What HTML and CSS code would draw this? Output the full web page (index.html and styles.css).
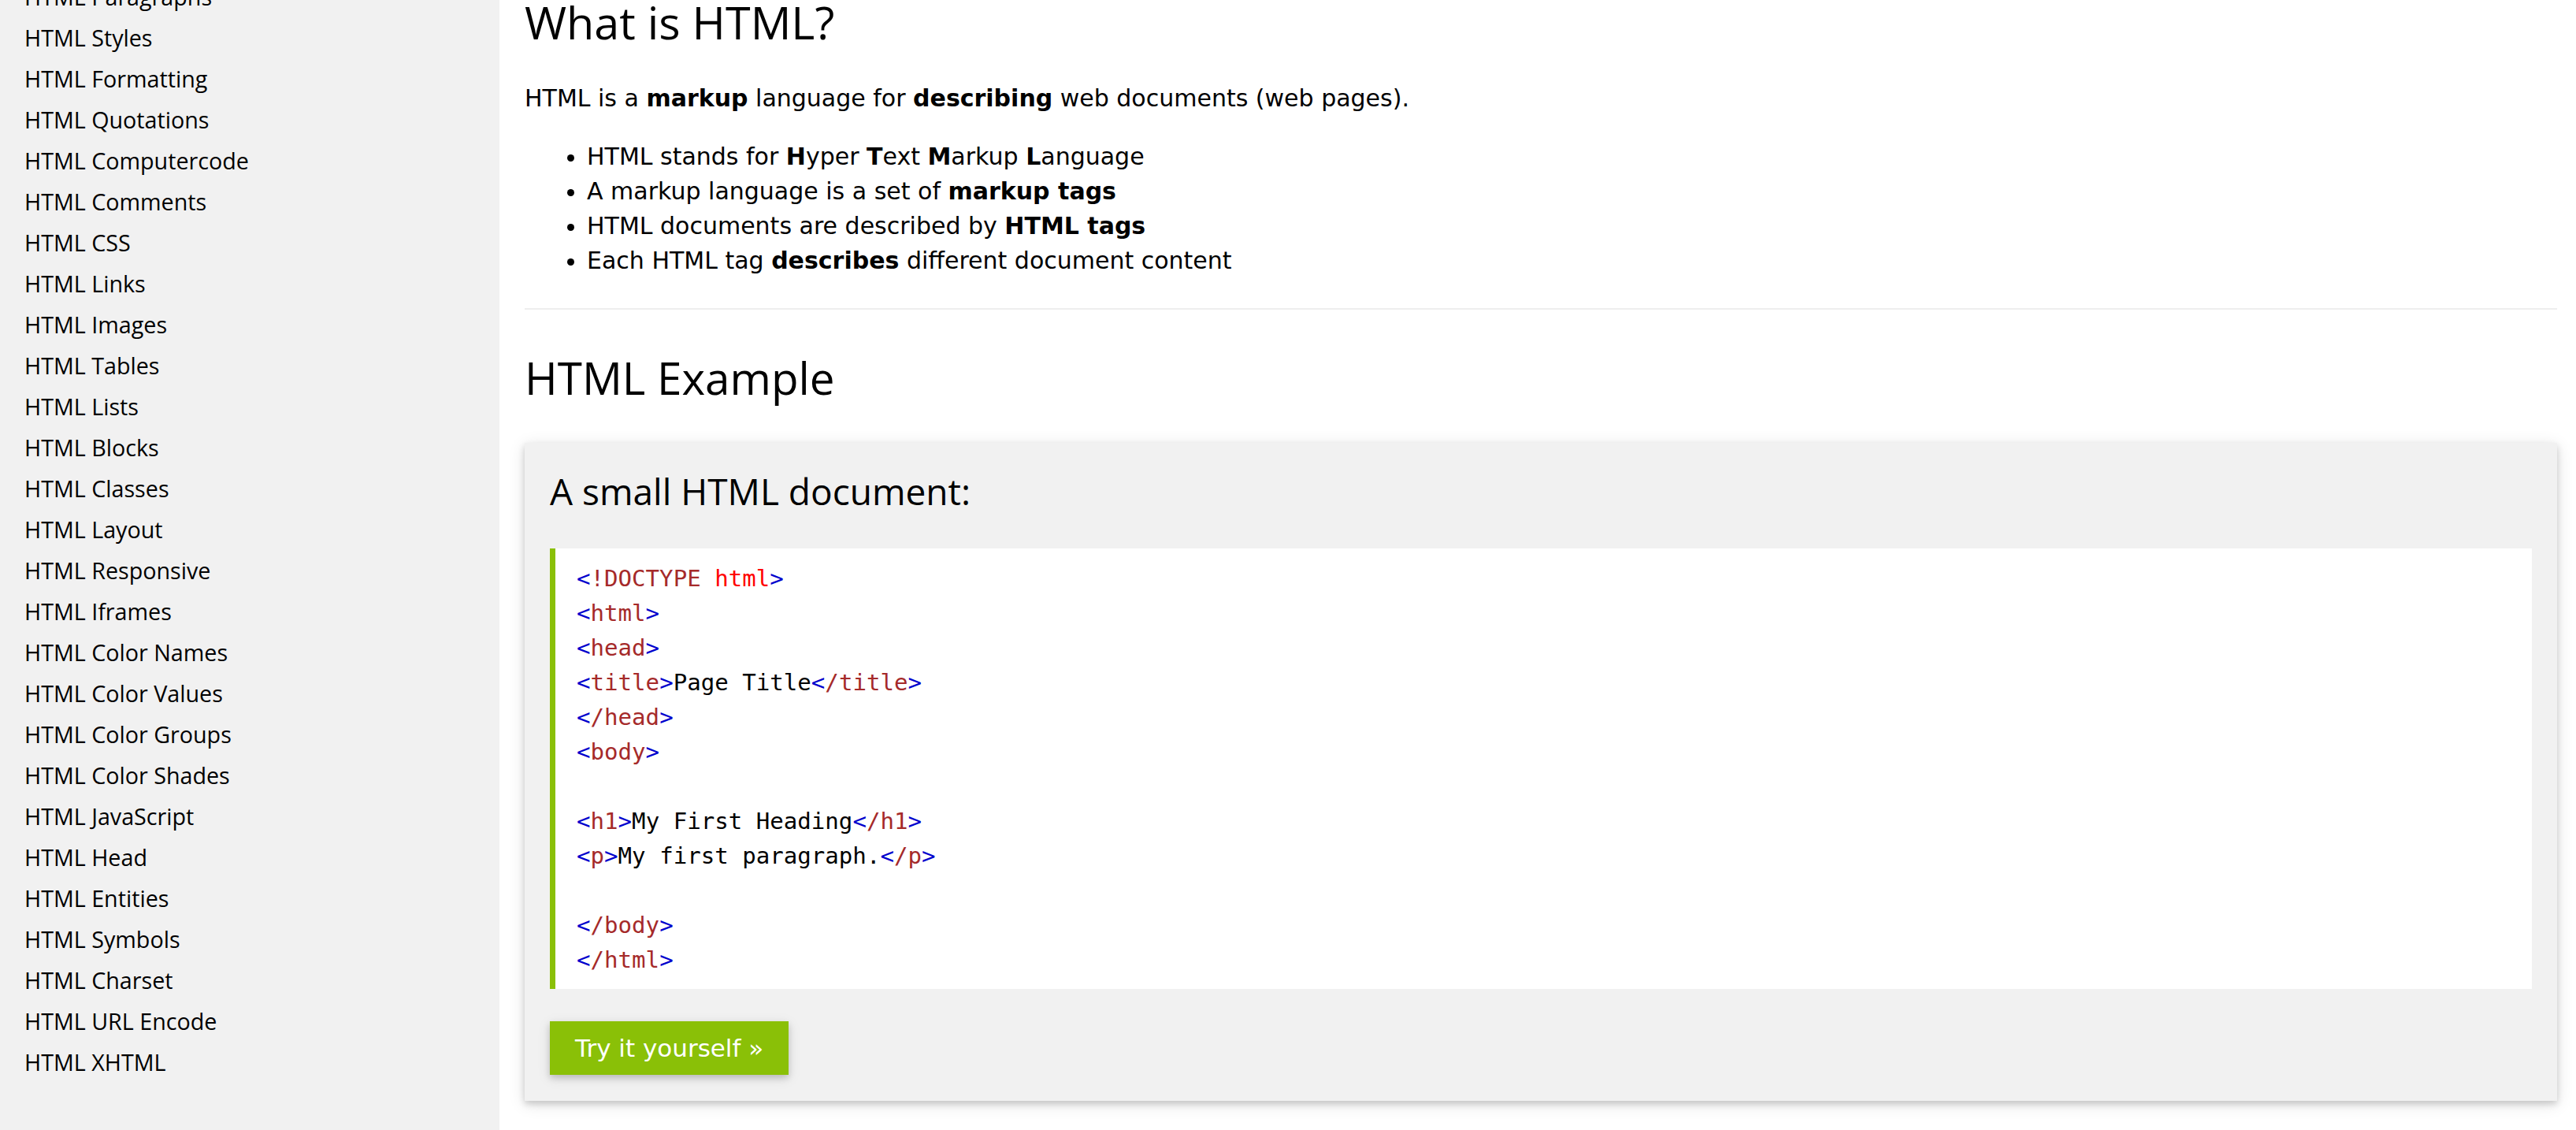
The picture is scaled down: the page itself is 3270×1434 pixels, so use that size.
FILE: index.html
```html
<!DOCTYPE html>
<html lang="en">
<head>
<meta charset="utf-8">
<title>HTML Introduction</title>
<link rel="stylesheet" href="styles.css">
</head>
<body>
<nav class="sidebar">
  <ul class="side-list">
    <li>HTML Paragraphs</li>
    <li>HTML Styles</li>
    <li>HTML Formatting</li>
    <li>HTML Quotations</li>
    <li>HTML Computercode</li>
    <li>HTML Comments</li>
    <li>HTML CSS</li>
    <li>HTML Links</li>
    <li>HTML Images</li>
    <li>HTML Tables</li>
    <li>HTML Lists</li>
    <li>HTML Blocks</li>
    <li>HTML Classes</li>
    <li>HTML Layout</li>
    <li>HTML Responsive</li>
    <li>HTML Iframes</li>
    <li>HTML Color Names</li>
    <li>HTML Color Values</li>
    <li>HTML Color Groups</li>
    <li>HTML Color Shades</li>
    <li>HTML JavaScript</li>
    <li>HTML Head</li>
    <li>HTML Entities</li>
    <li>HTML Symbols</li>
    <li>HTML Charset</li>
    <li>HTML URL Encode</li>
    <li>HTML XHTML</li>
  </ul>
</nav>
<main class="main">
  <h1 class="h1">What is HTML?</h1>
  <p class="para">HTML is a <b>markup</b> language for <b>describing</b> web documents (web pages).</p>
  <ul class="bullets">
    <li>HTML stands for <b>H</b>yper <b>T</b>ext <b>M</b>arkup <b>L</b>anguage</li>
    <li>A markup language is a set of <b>markup tags</b></li>
    <li>HTML documents are described by <b>HTML tags</b></li>
    <li>Each HTML tag <b>describes</b> different document content</li>
  </ul>
  <hr class="rule">
  <h2 class="h2">HTML Example</h2>
  <section class="example">
    <h3 class="h3">A small HTML document:</h3>
    <div class="code"><span class="b">&lt;</span><span class="t">!DOCTYPE</span> <span class="r">html</span><span class="b">&gt;</span><br><span class="b">&lt;</span><span class="t">html</span><span class="b">&gt;</span><br><span class="b">&lt;</span><span class="t">head</span><span class="b">&gt;</span><br><span class="b">&lt;</span><span class="t">title</span><span class="b">&gt;</span>Page Title<span class="b">&lt;</span><span class="t">/title</span><span class="b">&gt;</span><br><span class="b">&lt;</span><span class="t">/head</span><span class="b">&gt;</span><br><span class="b">&lt;</span><span class="t">body</span><span class="b">&gt;</span><br><br><span class="b">&lt;</span><span class="t">h1</span><span class="b">&gt;</span>My First Heading<span class="b">&lt;</span><span class="t">/h1</span><span class="b">&gt;</span><br><span class="b">&lt;</span><span class="t">p</span><span class="b">&gt;</span>My first paragraph.<span class="b">&lt;</span><span class="t">/p</span><span class="b">&gt;</span><br><br><span class="b">&lt;</span><span class="t">/body</span><span class="b">&gt;</span><br><span class="b">&lt;</span><span class="t">/html</span><span class="b">&gt;</span></div>
    <a class="try-btn">Try it yourself &raquo;</a>
  </section>
</main>
</body>
</html>
```
FILE: styles.css
```css
html, body {
  margin: 0;
  padding: 0;
  background: #ffffff;
  color: #000000;
}
body {
  display: flex;
  height: 1434px;
  overflow: hidden;
  font-family: "DejaVu Sans", Verdana, sans-serif;
}
.sidebar {
  width: 634px;
  flex: 0 0 634px;
  background: #f1f1f1;
  overflow: hidden;
}
.side-list {
  list-style: none;
  margin: -29.8px 0 0 0;
  padding: 0 0 0 31px;
  font-family: "Open Sans", sans-serif;
  font-size: 28.7px;
  line-height: 52px;
  color: #000;
}
.main {
  flex: 1;
  padding: 0 24px 0 32px;
  min-width: 0;
}
.h1 {
  font-family: "Open Sans", sans-serif;
  font-weight: 400;
  font-size: 57.5px;
  line-height: 56px;
  margin: 0;
}
.para {
  font-size: 30px;
  line-height: 44px;
  margin: 46.5px 0 0 0;
}
.bullets {
  font-size: 30px;
  line-height: 44px;
  margin: 30.5px 0 0 0;
  padding-left: 79px;
}
.rule {
  border: 0;
  height: 2px;
  background: #eeeeee;
  margin: 37.5px 0 0 0;
}
.h2 {
  font-family: "Open Sans", sans-serif;
  font-weight: 400;
  font-size: 56.6px;
  line-height: 68px;
  margin: 53px 0 0 0;
}
.example {
  margin-top: 48.5px;
  background: #f1f1f1;
  padding: 34px 32px 33px 32px;
  box-shadow: 0 4px 8px 0 rgba(0,0,0,0.16), 0 4px 20px 0 rgba(0,0,0,0.12);
}
.h3 {
  font-family: "Open Sans", sans-serif;
  font-weight: 400;
  font-size: 46px;
  line-height: 54px;
  margin: 0;
}
.code {
  margin-top: 46px;
  background: #ffffff;
  border-left: 7px solid #8ac007;
  padding: 16.2px 20px 14.8px 27px;
  font-family: "DejaVu Sans Mono", Consolas, monospace;
  font-size: 29.1px;
  line-height: 44px;
  color: #000;
  white-space: nowrap;
}
.code .b { color: #0000cd; }
.code .t { color: #a52a2a; }
.code .r { color: #ff0000; }
.try-btn {
  display: inline-block;
  margin-top: 41px;
  background: #8ac007;
  color: #ffffff;
  font-size: 31px;
  line-height: 68px;
  height: 68px;
  padding: 0 32px;
  box-shadow: 0 4px 8px 0 rgba(0,0,0,0.16), 0 4px 16px 0 rgba(0,0,0,0.10);
  text-decoration: none;
}
```
